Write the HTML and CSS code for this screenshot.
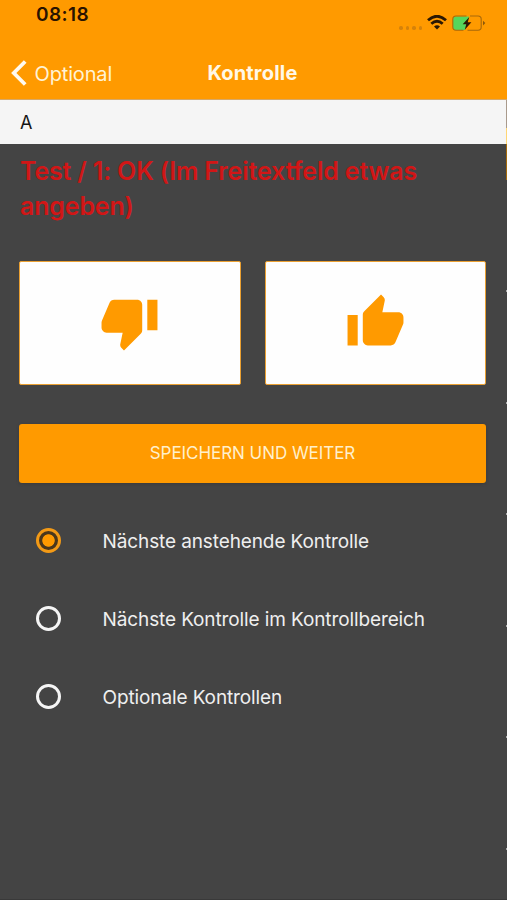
FILE: index.html
```html
<!DOCTYPE html>
<html lang="de">
<head>
<meta charset="utf-8">
<title>Kontrolle</title>
<link rel="stylesheet" href="styles.css">
</head>
<body>
<div class="screen">
  <header class="header">
    <div class="status">
      <span class="time">08:18</span>
      <div class="indicators">
        <span class="dots"><i></i><i></i><i></i><i></i></span>
        <svg class="wifi" width="20" height="15" viewBox="0 0 20 15" fill="none" stroke="#2a1804" stroke-width="2.8"><path d="M1 5.3Q10-2.8 19 5.3M4.3 8.8Q10 3.8 15.7 8.8"/><path d="M10 14.5 7 11.4Q10 9 13 11.4Z" fill="#2a1804" stroke="none"/></svg>
        <svg class="battery" width="34" height="17" viewBox="0 0 34 17"><path d="M4 1.5H17L13 15H4Q1 15 1 12V4.500Q1 1.500 4 1.500Z" fill="#55d65c"/><path d="M14.500 1H4Q.8 1 .8 4.200V12Q.8 15.200 4 15.200H11.500M18 1H26Q29.200 1 29.200 4.200V12Q29.200 15.200 26 15.200H15.500" fill="none" stroke="#a8680b" stroke-width="1.100"/><path d="M31 5.700 33.300 8.100 31 10.500Z" fill="#8b5709"/><path d="M17.300 2 10.700 9.200H14.200L12.800 14.800 19.400 7.300H15.700Z" fill="#2a1804"/></svg>
      </div>
    </div>
    <nav class="nav">
      <a class="back"><svg width="16" height="26" viewBox="0 0 16 26" fill="none" stroke="#fffaf0" stroke-width="3.800"><path d="M14.200 1.500 2.800 13 14.200 24.500"/></svg><span class="back-label">Optional</span></a>
      <h1 class="title">Kontrolle</h1>
    </nav>
  </header>
  <div class="section"><span>A</span></div>
  <main class="content">
    <h2 class="question">Test / 1: OK (Im Freitextfeld etwas<br>angeben)</h2>
    <div class="choices">
      <button class="choice" aria-label="Nicht OK"><svg width="61" height="61" viewBox="0 0 24 24"><path d="M15 3H6c-.83 0-1.540.500-1.840 1.220l-3.020 7.050c-.09.230-.14.470-.14.730v2c0 1.100.9 2 2 2h6.310l-.95 4.570-.03.320c0 .41.170.79.440 1.060L9.830 23l6.590-6.590c.36-.36.580-.86.580-1.410V5c0-1.100-.9-2-2-2zm4 0v12h4V3h-4z"/></svg></button>
      <button class="choice" aria-label="OK"><svg width="61" height="61" viewBox="0 0 24 24"><path d="M1 21h4V9H1v12zm22-11c0-1.100-.9-2-2-2h-6.310l.95-4.570.03-.32c0-.41-.17-.79-.44-1.060L14.170 1 7.590 7.590C7.220 7.950 7 8.450 7 9v10c0 1.100.9 2 2 2h9c.83 0 1.540-.5 1.840-1.220l3.020-7.050c.09-.23.140-.47.140-.73v-2z"/></svg></button>
    </div>
    <button class="save">SPEICHERN UND WEITER</button>
    <div class="options">
      <label class="option"><i class="radio checked"></i><span>Nächste anstehende Kontrolle</span></label>
      <label class="option"><i class="radio"></i><span>Nächste Kontrolle im Kontrollbereich</span></label>
      <label class="option"><i class="radio"></i><span>Optionale Kontrollen</span></label>
    </div>
  </main>
  <div class="edge"><i></i><i></i><i></i><i></i><i></i><i></i></div>
</div>
</body>
</html>
```
FILE: styles.css
```css
* { box-sizing: border-box; }
body { margin: 0; font-family: Inter, "Liberation Sans", sans-serif; }
button { font: inherit; padding: 0; }
.screen { position: relative; width: 507px; height: 900px; overflow: hidden; background: #444; border-bottom: 1px solid #393939; }
.header { height: 100px; background: #ff9a00; border-bottom: 1px solid #d8a865; }
.status { height: 46px; padding: 3px 21px 0 36px; display: flex; justify-content: space-between; }
.time { font-size: 19px; line-height: 23px; font-weight: 600; letter-spacing: .4px; color: #2a1300; }
.indicators { display: flex; padding-top: 12px; }
.dots { display: flex; gap: 3px; padding: 11px 5px 0 0; }
.dots i { width: 3.500px; height: 3.500px; border-radius: 50%; background: #d5820a; }
.wifi { margin-right: 5px; }
.nav { display: grid; grid-template-columns: 1fr auto 1fr; height: 54px; align-items: center; padding-right: 2px; }
.back { display: flex; align-items: center; gap: 7.500px; padding-left: 11px; color: #fff3d6; font-size: 20px; }
.back-label { letter-spacing: -.15px; position: relative; top: 1px; }
.title { margin: 0; font-size: 20px; line-height: 24px; font-weight: 700; letter-spacing: .2px; color: #fff8e8; }
.section { height: 44px; background: #f5f5f5; padding-left: 20px; font-size: 18px; line-height: 45px; color: #151515; }
.content { padding: 10px 21px 0 19px; }
.question { height: 80px; margin: 0; padding-left: 1px; font-size: 25px; line-height: 35px; font-weight: 600; letter-spacing: -.17px; color: #d11616; white-space: nowrap; }
.choices { display: grid; grid-template-columns: 1fr 1fr; gap: 24px; height: 124px; margin-top: 27px; }
.choice { display: flex; align-items: center; justify-content: center; border: 1.500px solid #eaa032; border-radius: 2px; background: #fefefe; fill: #ff9a00; padding-bottom: 1px; }
.save { display: block; width: 100%; height: 59px; margin-top: 39px; padding-bottom: 1px; border: 0; border-radius: 3px; background: #ff9a00; color: #fff0cc; font-size: 17px; letter-spacing: -.05px; box-shadow: 0 1px 3px #3338; }
.options { margin-top: 19px; }
.option { display: flex; align-items: center; height: 78px; padding-left: 16.500px; gap: 42px; font-size: 19px; letter-spacing: -.11px; color: #efefef; white-space: nowrap; }
.radio { width: 25px; height: 25px; flex: none; margin-bottom: 1px; border: 3px solid #f5f5f5; border-radius: 50%; }
.checked { border-color: #f39a16; background: radial-gradient(circle, #ff9a00 0 5.800px, #4a371c 6.600px); }
.edge { position: absolute; right: 0; top: 100px; width: 1px; height: 80px; background: linear-gradient(#a99a8c 0 28px, #ffd675 28px 44px, #a46a0b 44px); }
.edge i { display: block; width: 1px; height: 2px; margin-bottom: 109.600px; background: #aaa; }
.edge i:first-child { margin-top: 190px; }
```
